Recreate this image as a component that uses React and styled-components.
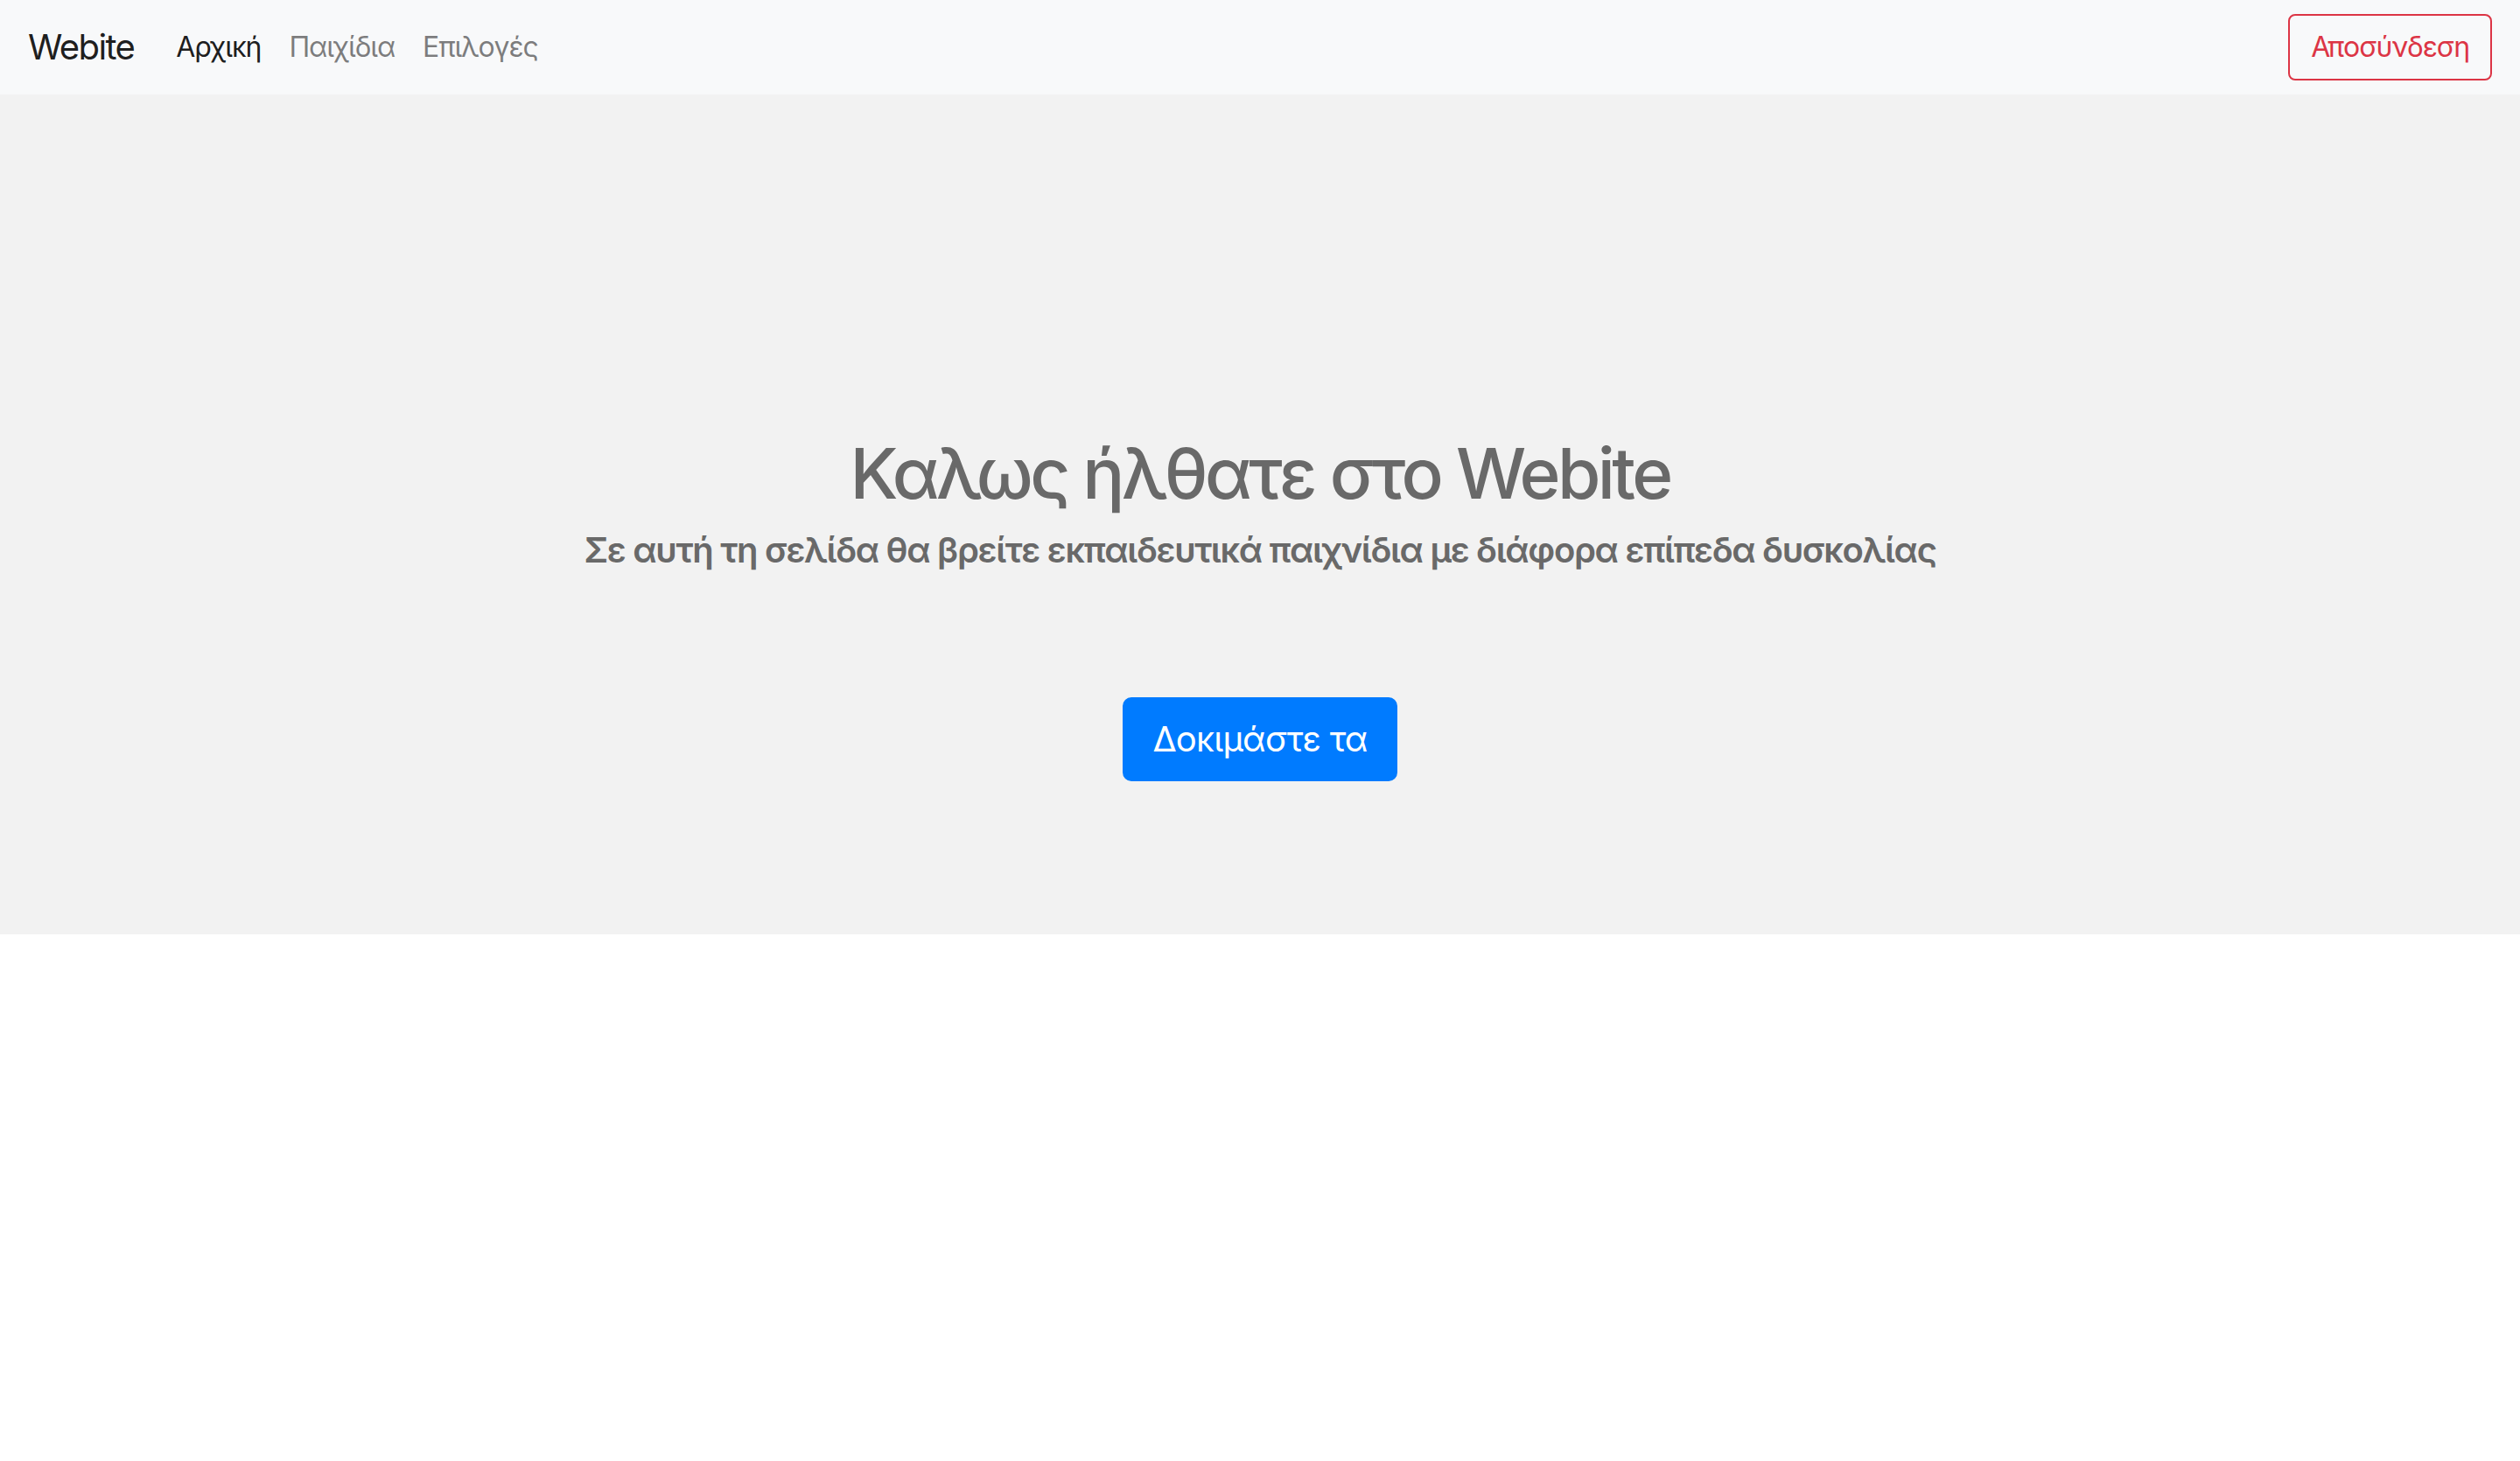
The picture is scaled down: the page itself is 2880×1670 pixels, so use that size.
import styled, { createGlobalStyle } from 'styled-components';

const GlobalStyle = createGlobalStyle`
  * {
    box-sizing: border-box;
  }

  body {
    margin: 0;
    font-family: Inter, "Noto Sans", "Liberation Sans", sans-serif;
    color: #212529;
    background-color: #fff;
  }
`;

const links = [
  { label: 'Αρχική', active: true },
  { label: 'Παιχίδια' },
  { label: 'Επιλογές' },
];

function App() {
  return (
    <>
      <GlobalStyle />
      <Navbar>
        <Brand href="#">Webite</Brand>
        <NavList>
          {links.map(link => (
            <NavLink key={link.label} href="#" $active={link.active}>
              {link.label}
            </NavLink>
          ))}
        </NavList>
        <LogoutButton type="button">Αποσύνδεση</LogoutButton>
      </Navbar>

      <Hero>
        <Title>Καλως ήλθατε στο Webite</Title>
        <Subtitle>
          Σε αυτή τη σελίδα θα βρείτε εκπαιδευτικά παιχνίδια με διάφορα επίπεδα
          δυσκολίας
        </Subtitle>
        <TryButton type="button">Δοκιμάστε τα</TryButton>
      </Hero>
    </>
  );
}

// --------Styles-------

const Navbar = styled.nav`
  display: flex;
  align-items: center;
  height: 108px;
  padding: 0 32px;
  background-color: #f8f9fa;
`;

const Brand = styled.a`
  margin-right: 32px;
  font-size: 40px;
  line-height: 1.5;
  letter-spacing: -0.04em;
  color: rgba(0, 0, 0, 0.9);
  text-decoration: none;
`;

const NavList = styled.div`
  display: flex;
  align-items: center;
  flex: 1;
`;

const NavLink = styled.a`
  padding: 16px;
  font-size: 32px;
  line-height: 1.5;
  letter-spacing: -0.035em;
  color: ${p => (p.$active ? 'rgba(0, 0, 0, 0.9)' : 'rgba(0, 0, 0, 0.5)')};
  text-decoration: none;
`;

const LogoutButton = styled.button`
  padding: 12px 24px;
  font: inherit;
  font-size: 32px;
  line-height: 1.5;
  letter-spacing: -0.034em;
  color: #dc3545;
  background: transparent;
  border: 2px solid #dc3545;
  border-radius: 8px;
  cursor: pointer;
`;

const Hero = styled.section`
  display: flex;
  flex-direction: column;
  align-items: center;
  height: 960px;
  padding-top: 385px;
  background-color: #f2f2f2;
  color: #696969;
  text-align: center;
`;

const Title = styled.h1`
  margin: 0 0 16px;
  font-size: 80px;
  font-weight: 500;
  line-height: 1.2;
  letter-spacing: -0.045em;
`;

const Subtitle = styled.h5`
  margin: 0 0 144px;
  font-size: 40px;
  font-weight: 600;
  line-height: 1.2;
  letter-spacing: -0.033em;
`;

const TryButton = styled.button`
  padding: 16px 32px;
  font: inherit;
  font-size: 40px;
  line-height: 1.5;
  letter-spacing: -0.02em;
  color: #fff;
  background-color: #007bff;
  border: 2px solid #007bff;
  border-radius: 10px;
  cursor: pointer;
`;

export default App;
